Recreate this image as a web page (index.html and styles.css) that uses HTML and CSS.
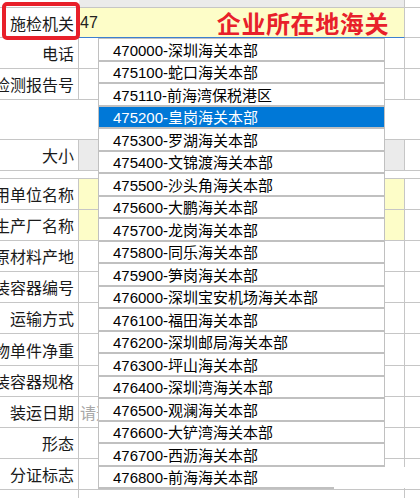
FILE: index.html
```html
<!DOCTYPE html>
<html lang="zh-CN">
<head>
<meta charset="utf-8">
<title>施检机关</title>
<link rel="stylesheet" href="styles.css">
</head>
<body>
<div class="sheet">
  <div class="row strip"><div class="lab"></div><div class="val gray"></div><div class="ext"></div></div>
  <div class="row top"><div class="lab"><span>施检机关</span></div><div class="val input"><span class="typed">47</span><span class="note">企业所在地海关</span></div><div class="ext"></div></div>
  <div class="row"><div class="lab"><span>电话</span></div><div class="val"></div><div class="ext"></div></div>
  <div class="row"><div class="lab"><span>检验检测报告号</span></div><div class="val"></div><div class="ext"></div></div>
  <div class="row blank"></div>
  <div class="row"><div class="lab"><span>大小</span></div><div class="val gray"></div><div class="ext"></div></div>
  <div class="row thin"></div>
  <div class="row"><div class="lab"><span>使用单位名称</span></div><div class="val yellow"></div><div class="ext"></div></div>
  <div class="row"><div class="lab"><span>生产厂名称</span></div><div class="val yellow"></div><div class="ext"></div></div>
  <div class="row"><div class="lab"><span>原材料产地</span></div><div class="val"></div><div class="ext"></div></div>
  <div class="row"><div class="lab"><span>包装容器编号</span></div><div class="val"></div><div class="ext"></div></div>
  <div class="row"><div class="lab"><span>运输方式</span></div><div class="val"></div><div class="ext"></div></div>
  <div class="row tall"><div class="lab"><span>货物单件净重</span></div><div class="val"></div><div class="ext"></div></div>
  <div class="row"><div class="lab"><span>包装容器规格</span></div><div class="val"></div><div class="ext"></div></div>
  <div class="row"><div class="lab"><span>装运日期</span></div><div class="val"><span class="ph">请选择日期</span></div><div class="ext"></div></div>
  <div class="row"><div class="lab"><span>形态</span></div><div class="val"></div><div class="ext"></div></div>
  <div class="row"><div class="lab"><span>分证标志</span></div><div class="val"></div><div class="ext"></div></div>
  <div class="row"><div class="lab"></div><div class="val"></div><div class="ext"></div></div>
</div>

<div class="redbox"></div>

<ul class="dropdown">
  <li>470000-深圳海关本部</li>
  <li>475100-蛇口海关本部</li>
  <li>475110-前海湾保税港区</li>
  <li class="sel">475200-皇岗海关本部</li>
  <li>475300-罗湖海关本部</li>
  <li>475400-文锦渡海关本部</li>
  <li>475500-沙头角海关本部</li>
  <li>475600-大鹏海关本部</li>
  <li>475700-龙岗海关本部</li>
  <li>475800-同乐海关本部</li>
  <li>475900-笋岗海关本部</li>
  <li>476000-深圳宝安机场海关本部</li>
  <li>476100-福田海关本部</li>
  <li>476200-深圳邮局海关本部</li>
  <li>476300-坪山海关本部</li>
  <li>476400-深圳湾海关本部</li>
  <li>476500-观澜海关本部</li>
  <li>476600-大铲湾海关本部</li>
  <li>476700-西沥海关本部</li>
  <li class="last">476800-前海海关本部</li>
</ul>
</body>
</html>
```

FILE: styles.css
```css
html, body {
  margin: 0;
  padding: 0;
  background: #ffffff;
  overflow: hidden;
}

body {
  width: 420px;
  height: 498px;
  position: relative;
  font-family: "Liberation Sans", "Noto Sans CJK SC", sans-serif;
  color: #1a1a1a;
}

.sheet {
  display: flex;
  flex-direction: column;
  width: 420px;
}

.row {
  display: grid;
  grid-template-columns: 79px 326px 1fr;
  height: 31px;
  box-sizing: border-box;
  border-bottom: 1px solid #c6c6c6;
  flex: none;
}

.row.strip { height: 8px; }
.row.top { height: 30px; border-bottom: none; }
.row.blank { height: 40px; display: block; }
.row.thin { height: 8px; display: block; }
.row.tall { height: 32px; }

.lab {
  border-right: 1px solid #c6c6c6;
  display: flex;
  justify-content: flex-end;
  align-items: center;
  padding-right: 4px;
  overflow: hidden;
  white-space: nowrap;
  font-size: 16px;
}

.strip .lab { border-right: none; }

.val {
  border-right: 1px solid #c6c6c6;
  display: flex;
  align-items: center;
  overflow: hidden;
  white-space: nowrap;
}

.gray { background: #ebebeb; }
.yellow { background: #fdfdc8; }

.top .lab { border-bottom: 1px solid #c6c6c6; }
.top .ext { border-bottom: 1px solid #c6c6c6; }

.input {
  background: #fdfdc8;
  border-bottom: 1px solid #3c7fd1;
  padding-right: 15px;
}

.typed {
  font-size: 16px;
  padding-left: 1px;
  color: #222;
}

.note {
  margin-left: auto;
  font-size: 24px;
  font-weight: bold;
  color: #e8202a;
  letter-spacing: 0.6px;
  font-family: "Noto Sans CJK SC", sans-serif;
}

.ph {
  font-size: 16px;
  color: #a8a8a8;
  padding-left: 1px;
}

.redbox {
  position: absolute;
  left: 2px;
  top: 2px;
  width: 78px;
  height: 38px;
  box-sizing: border-box;
  border: 4px solid #e8202a;
  border-radius: 5px;
}

.dropdown {
  position: absolute;
  left: 98px;
  top: 38px;
  width: 287px;
  box-sizing: border-box;
  margin: 0;
  padding: 0;
  list-style: none;
  border-left: 1px solid #c0c0c0;
  border-top: 1px solid #c0c0c0;
  font-size: 15px;
  color: #000;
}

.dropdown li {
  height: 22.5px;
  box-sizing: border-box;
  border-bottom: 2px solid #c0c0c0;
  border-right: 1px solid #c0c0c0;
  padding-left: 14px;
  display: flex;
  align-items: center;
  background: #ffffff;
  white-space: nowrap;
}

.dropdown li.sel {
  background: #0078d7;
  color: #ffffff;
}

.dropdown li.last {
  width: 235px;
  border-right: none;
  position: relative;
}

.dropdown li.last::after {
  content: "";
  position: absolute;
  left: 100%;
  top: 0;
  width: 90px;
  height: 21px;
  background: #ffffff;
}
```
